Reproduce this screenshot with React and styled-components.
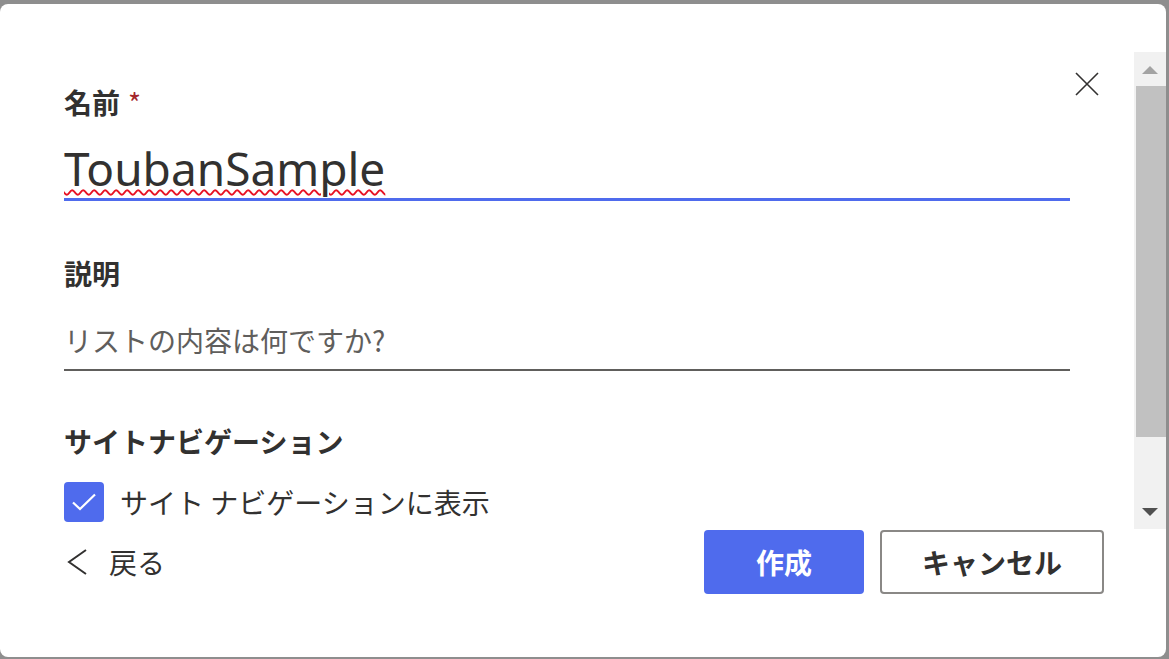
import React from 'react';
import styled, { createGlobalStyle } from 'styled-components';

const C = {
  text: '#323130',
  sub: '#605e5c',
  blue: '#4f6bed',
  red: '#a4262c',
  line: '#605e5c',
};

const Global = createGlobalStyle`
  html, body { margin: 0; background: #8e8e8e; }
  body {
    font-family: "Noto Sans CJK JP", "Noto Sans", sans-serif;
    color: ${C.text};
  }
`;

const Dialog = styled.div`
  margin-top: 4px;
  width: 1166px;
  height: 653px;
  background: #fff;
  border-radius: 8px;
  position: relative;
  display: flex;
  flex-direction: column;
  overflow: hidden;
`;

const Body = styled.div`
  margin-top: 48px;
  height: 477px;
  display: flex;
`;

const Content = styled.div`
  flex: 1;
  padding: 30px 64px 0;
  overflow: hidden;
`;

const Label = styled.div`
  font-size: 28px;
  line-height: 40px;
  font-weight: 700;
  margin-top: ${p => p.top || 0}px;
`;

const Required = styled.span`
  color: ${C.red};
  font-weight: 400;
  margin-left: 8px;
`;

const NameField = styled.div`
  height: 79px;
  box-sizing: border-box;
  padding-top: 16px;
  border-bottom: 3px solid ${C.blue};
  font-family: "Noto Sans", "Open Sans", sans-serif;
  font-size: 46px;
  line-height: 60px;
  color: ${C.text};
`;

const Squiggle = styled.span`
  text-decoration: underline wavy #e81123;
  text-decoration-thickness: 1.5px;
  text-underline-offset: 3px;
`;

const DescField = styled.div`
  padding: 27px 0 9px;
  font-size: 28px;
  line-height: 40px;
  color: ${C.sub};
  border-bottom: 2px solid ${C.line};
`;

const CheckRow = styled.div`
  display: flex;
  align-items: center;
  gap: 16px;
  margin-top: 21px;
  height: 40px;
  font-size: 28px;
`;

const Box = styled.div`
  width: 40px;
  height: 40px;
  border-radius: 4px;
  background: ${C.blue};
  display: flex;
  align-items: center;
  justify-content: center;
`;

const Scrollbar = styled.div`
  width: 32px;
  background: #f1f1f1;
  display: flex;
  flex-direction: column;
`;

const Arrow = styled.div`
  height: 34px;
  display: flex;
  align-items: center;
  justify-content: center;
  padding-top: ${p => p.shift || 0}px;
  box-sizing: border-box;
`;

const Thumb = styled.div`
  height: 351px;
  margin-left: 2px;
  background: #c1c1c1;
`;

const Track = styled.div`
  flex: 1;
`;

const Footer = styled.div`
  margin-top: 1px;
  height: 64px;
  padding: 0 62px 0 64px;
  display: flex;
  align-items: center;
`;

const Back = styled.div`
  display: flex;
  align-items: center;
  gap: 22px;
  font-size: 28px;
  padding-left: 3px;
  flex: 1;
`;

const Button = styled.button`
  height: 64px;
  width: ${p => p.w}px;
  margin-left: 16px;
  border-radius: 4px;
  font-family: inherit;
  font-size: 28px;
  font-weight: 700;
  box-sizing: border-box;
  background: ${p => (p.primary ? C.blue : '#fff')};
  color: ${p => (p.primary ? '#fff' : C.text)};
  border: ${p => (p.primary ? 'none' : '2px solid #8a8886')};
`;

const Close = styled.div`
  position: absolute;
  left: 1075px;
  top: 68px;
  width: 24px;
  height: 24px;
`;

export default function App() {
  return (
    <>
      <Global />
      <Dialog>
        <Close>
          <svg width="24" height="24" viewBox="0 0 24 24">
            <path d="M1 1L23 23M23 1L1 23" stroke={C.text} strokeWidth="1.6" fill="none" />
          </svg>
        </Close>
        <Body>
          <Content>
            <Label>
              名前<Required>*</Required>
            </Label>
            <NameField>
              <Squiggle>ToubanSample</Squiggle>
            </NameField>
            <Label top={52}>説明</Label>
            <DescField>リストの内容は何ですか?</DescField>
            <Label top={50}>サイトナビゲーション</Label>
            <CheckRow>
              <Box>
                <svg width="24" height="24" viewBox="0 0 24 24">
                  <path d="M1 12.5L8 19L23 4.5" stroke="#fff" strokeWidth="2.2" fill="none" />
                </svg>
              </Box>
              サイト ナビゲーションに表示
            </CheckRow>
          </Content>
          <Scrollbar>
            <Arrow shift={2}>
              <svg width="16" height="9" viewBox="0 0 16 9">
                <path d="M8 0L16 8H0Z" fill="#a3a3a3" />
              </svg>
            </Arrow>
            <Thumb />
            <Track />
            <Arrow>
              <svg width="16" height="9" viewBox="0 0 16 9">
                <path d="M0 0H16L8 8Z" fill="#505050" />
              </svg>
            </Arrow>
          </Scrollbar>
        </Body>
        <Footer>
          <Back>
            <svg width="20" height="26" viewBox="0 0 20 26">
              <path d="M19 1L2 13L19 25" stroke={C.text} strokeWidth="2" fill="none" />
            </svg>
            戻る
          </Back>
          <Button primary w={160}>作成</Button>
          <Button w={224}>キャンセル</Button>
        </Footer>
      </Dialog>
    </>
  );
}
